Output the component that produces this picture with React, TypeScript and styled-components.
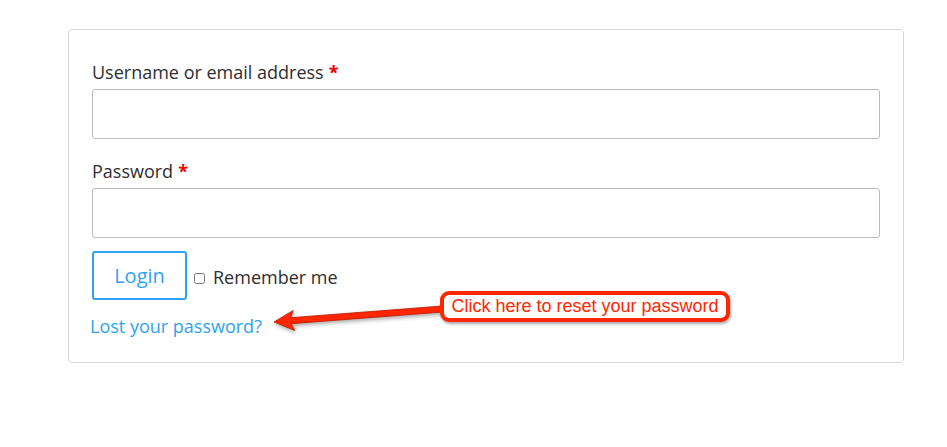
import styled, { createGlobalStyle } from 'styled-components'

const GlobalStyle = createGlobalStyle`
  body {
    margin: 0;
    background: #fff;
    font-family: 'Open Sans', 'Liberation Sans', sans-serif;
    color: #333;
  }
`

const Page = styled.div`
  position: relative;
  width: 947px;
  height: 447px;
  padding: 29px 0 0 68px;
  box-sizing: border-box;
`

const Card = styled.form`
  width: 836px;
  box-sizing: border-box;
  border: 1px solid #d6d6d6;
  border-radius: 4px;
  padding: 30px 23px 23px 23px;
  display: flex;
  flex-direction: column;
`

const Field = styled.div<{ $last?: boolean }>`
  display: flex;
  flex-direction: column;
  margin-bottom: ${(p) => (p.$last ? '13px' : '20px')};
`

const Label = styled.label`
  font-size: 18px;
  line-height: 24px;
  margin-bottom: 5px;
  color: #2e2e2e;
`

const Required = styled.span`
  color: #e00;
  font-weight: 700;
  margin-left: 5px;
`

const Input = styled.input`
  height: 50px;
  box-sizing: border-box;
  border: 1px solid #bbb;
  border-radius: 3px;
  font-size: 16px;
  padding: 0 10px;
`

const ActionRow = styled.div`
  display: flex;
  align-items: center;
  gap: 7px;
`

const LoginButton = styled.button`
  width: 95px;
  height: 49px;
  box-sizing: border-box;
  border: 2px solid #2ea3f2;
  border-radius: 3px;
  background: #fff;
  color: #2ea3f2;
  font-family: inherit;
  font-size: 20px;
  padding: 0;
`

const Remember = styled.label`
  display: flex;
  align-items: center;
  gap: 8px;
  font-size: 18px;
  color: #2e2e2e;
  padding-top: 2px;
`

const Check = styled.input`
  width: 11px;
  height: 11px;
  margin: 3px 0 0 0;
`

const LostLink = styled.a`
  margin: 13px 0 0 -2px;
  font-size: 18px;
  line-height: 26px;
  color: #2ea3f2;
  text-decoration: none;
  align-self: flex-start;
`

const Annotation = styled.div`
  position: absolute;
  left: 0;
  top: 0;
  width: 947px;
  height: 447px;
  pointer-events: none;
`

const ArrowSvg = styled.svg`
  position: absolute;
  left: 0;
  top: 0;
  filter: drop-shadow(1px 2px 2px rgba(0, 0, 0, 0.35));
`

const Callout = styled.div`
  position: absolute;
  left: 440px;
  top: 291px;
  width: 290px;
  height: 31px;
  box-sizing: border-box;
  border: 4px solid #ff2600;
  border-radius: 9px;
  background: #fff;
  box-shadow: 1px 2px 3px rgba(0, 0, 0, 0.35);
  display: flex;
  align-items: center;
  justify-content: center;
  font-family: 'Liberation Sans', Arial, sans-serif;
  font-size: 18px;
  color: #ff2600;
  white-space: nowrap;
`

export default function App() {
  return (
    <>
      <GlobalStyle />
      <Page>
        <Card>
          <Field>
            <Label>
              Username or email address<Required>*</Required>
            </Label>
            <Input type="text" />
          </Field>
          <Field $last>
            <Label>
              Password<Required>*</Required>
            </Label>
            <Input type="password" />
          </Field>
          <ActionRow>
            <LoginButton type="button">Login</LoginButton>
            <Remember>
              <Check type="checkbox" />
              Remember me
            </Remember>
          </ActionRow>
          <LostLink href="#">Lost your password?</LostLink>
        </Card>

        <Annotation>
          <ArrowSvg width="947" height="447">
            <g transform="translate(274 322) rotate(-4.4)">
              <polygon
                points="0,0 20,-10 17,-3 172,-3 172,3 17,3 20,10"
                fill="#ff2600"
                stroke="#c21a00"
                strokeWidth="0.8"
                strokeLinejoin="round"
              />
            </g>
          </ArrowSvg>
          <Callout>Click here to reset your password</Callout>
        </Annotation>
      </Page>
    </>
  )
}
